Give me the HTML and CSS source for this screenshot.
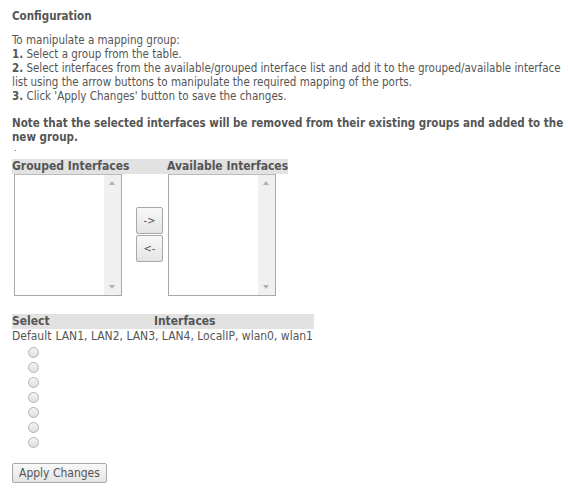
FILE: index.html
```html
<!DOCTYPE html>
<html lang="en">
<head>
    <meta charset="UTF-8">
    <title>Interface Grouping</title>
    <link rel="stylesheet" href="styles.css">
</head>
<body>
    <div class="page">
        <h2 class="title">Configuration</h2>
        <p class="intro">
            To manipulate a mapping group:<br>
            <b>1.</b> Select a group from the table.<br>
            <b>2.</b> Select interfaces from the available/grouped interface list and add it to the grouped/available interface<br>
            list using the arrow buttons to manipulate the required mapping of the ports.<br>
            <b>3.</b> Click 'Apply Changes' button to save the changes.
        </p>
        <p class="note">Note that the selected interfaces will be removed from their existing groups and added to the<br>new group.</p>
        <div class="dot">.</div>

        <table class="map-table">
            <tr>
                <th class="head col-list">Grouped Interfaces</th>
                <th class="head gap"></th>
                <th class="head">Available Interfaces</th>
            </tr>
            <tr>
                <td>
                    <div class="listbox">
                        <div class="list-area"></div>
                        <div class="scroll"><span class="arrow up"></span><span class="arrow down"></span></div>
                    </div>
                </td>
                <td class="mid">
                    <button class="btn arrow-btn">-&gt;</button>
                    <button class="btn arrow-btn">&lt;-</button>
                </td>
                <td>
                    <div class="listbox right">
                        <div class="list-area"></div>
                        <div class="scroll"><span class="arrow up"></span><span class="arrow down"></span></div>
                    </div>
                </td>
            </tr>
        </table>

        <table class="group-table">
            <tr>
                <th class="head sel-head">Select</th>
                <th class="head if-head">Interfaces</th>
            </tr>
            <tr>
                <td class="cell name">Default</td>
                <td class="cell">LAN1, LAN2, LAN3, LAN4, LocalIP, wlan0, wlan1</td>
            </tr>
            <tr><td class="radio-cell"><input type="radio" name="grp"></td><td></td></tr>
            <tr><td class="radio-cell"><input type="radio" name="grp"></td><td></td></tr>
            <tr><td class="radio-cell"><input type="radio" name="grp"></td><td></td></tr>
            <tr><td class="radio-cell"><input type="radio" name="grp"></td><td></td></tr>
            <tr><td class="radio-cell"><input type="radio" name="grp"></td><td></td></tr>
            <tr><td class="radio-cell"><input type="radio" name="grp"></td><td></td></tr>
            <tr><td class="radio-cell"><input type="radio" name="grp"></td><td></td></tr>
        </table>

        <button class="btn apply">Apply Changes</button>
    </div>
</body>
</html>
```

FILE: styles.css
```css
body {
    margin: 0;
    background: #fff;
    font-family: 'DejaVu Sans Condensed', 'DejaVu Sans', sans-serif;
    font-stretch: condensed;
    font-size: 11.5px;
    color: #555;
}

.page {
    padding: 9px 12px;
}

.title {
    font-size: 11.5px;
    font-weight: bold;
    margin: 0 0 10px 0;
    line-height: 14px;
}

.intro {
    margin: 0;
    line-height: 14px;
    white-space: nowrap;
}

.note {
    margin: 13px 0 0 0;
    font-weight: bold;
    line-height: 14px;
    white-space: nowrap;
}

.dot {
    height: 13px;
    line-height: 8px;
    font-size: 9px;
    padding-left: 2px;
}

table {
    border-collapse: collapse;
}

td, th {
    padding: 0;
    vertical-align: top;
}

.head {
    background: #e2e2e2;
    font-size: 12px;
    font-weight: bold;
    text-align: left;
    height: 15px;
    line-height: 15px;
    white-space: nowrap;
}

.map-table {
    margin-top: 2px;
}

.col-list {
    width: 120px;
}

.gap {
    width: 35px;
}

.listbox {
    display: flex;
    width: 106px;
    height: 120px;
    border: 1px solid #a8a8a8;
    border-top-color: #bbb;
    margin: 0 0 0 2px;
    background: #fff;
}

.listbox.right {
    margin-left: 1px;
}

.list-area {
    flex: 1;
}

.scroll {
    width: 17px;
    background: #f0f0f0;
    position: relative;
}

.arrow {
    position: absolute;
    left: 5px;
    width: 0;
    height: 0;
    border-left: 3px solid transparent;
    border-right: 3px solid transparent;
}

.arrow.up {
    top: 6px;
    border-bottom: 4px solid #b0b0b0;
}

.arrow.down {
    bottom: 6px;
    border-top: 4px solid #b0b0b0;
}

.mid {
    padding-top: 33px;
}

.btn {
    font-family: 'DejaVu Sans Condensed', 'DejaVu Sans', sans-serif;
    font-stretch: condensed;
    color: #555;
    background: linear-gradient(to bottom, #f8f8f8, #e4e4e4);
    border: 1px solid #a8a8a8;
    border-radius: 2px;
    padding: 0;
    cursor: pointer;
}

.arrow-btn {
    display: block;
    width: 27px;
    height: 27px;
    font-size: 11px;
    margin: 0 0 1px 4px;
}

.group-table {
    margin-top: 18px;
}

.if-head {
    text-align: center;
}

.cell {
    font-size: 12px;
    line-height: 15px;
    white-space: nowrap;
    padding: 0 1px 1px 0;
}

.cell.name {
    padding-right: 4px;
}

.radio-cell {
    text-align: center;
    height: 15px;
}

.radio-cell input {
    appearance: none;
    width: 11px;
    height: 11px;
    margin: 2px 0 0 0;
    border: 1px solid #b4b4b4;
    border-radius: 50%;
    background: linear-gradient(to bottom, #f4f4f4, #dedede);
    vertical-align: top;
}

.apply {
    margin-top: 13px;
    font-size: 12px;
    height: 20px;
    padding: 0 6px;
}
```
